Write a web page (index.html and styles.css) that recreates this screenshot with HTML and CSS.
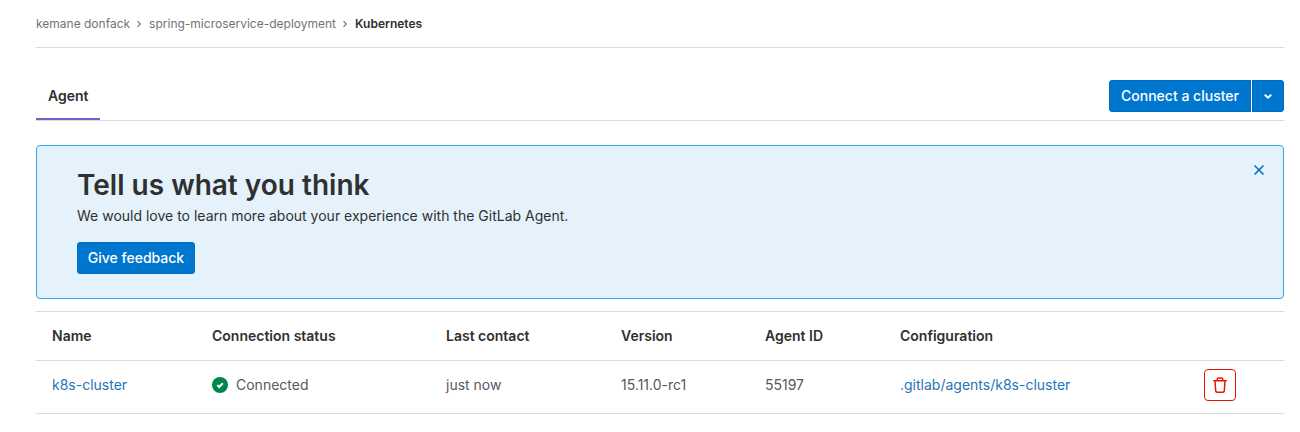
FILE: index.html
```html
<!DOCTYPE html>
<html lang="en">
<head>
<meta charset="utf-8">
<title>Kubernetes</title>
<link rel="stylesheet" href="styles.css">
</head>
<body>
<main class="page">
  <nav class="breadcrumbs">
    <a class="crumb crumb-owner">kemane donfack</a>
    <svg class="crumb-sep" viewBox="0 0 8 8"><path d="M2.5 1.2 5.3 4 2.5 6.8"/></svg>
    <a class="crumb crumb-project">spring-microservice-deployment</a>
    <svg class="crumb-sep" viewBox="0 0 8 8"><path d="M2.5 1.2 5.3 4 2.5 6.8"/></svg>
    <a class="crumb crumb-current">Kubernetes</a>
  </nav>
  <div class="tabs">
    <a class="tab">Agent</a>
    <div class="button-group">
      <button class="button button-connect"><span>Connect a cluster</span></button>
      <button class="button button-toggle" aria-label="More options"><svg viewBox="0 0 16 16"><path d="m4.75 6.75 3.25 3 3.25-3"/></svg></button>
    </div>
  </div>
  <section class="banner">
    <div class="banner-content">
      <h1 class="banner-title">Tell us what you think</h1>
      <p class="banner-text">We would love to learn more about your experience with the GitLab Agent.</p>
      <button class="button button-feedback"><span>Give feedback</span></button>
    </div>
    <svg class="close" viewBox="0 0 16 16"><path d="m3.5 3.5 9 9m0-9-9 9"/></svg>
  </section>
  <div class="table">
    <div class="row row-head">
      <span>Name</span><span>Connection status</span><span>Last contact</span><span>Version</span><span>Agent ID</span><span>Configuration</span><span></span>
    </div>
    <div class="row row-body">
      <a class="link">k8s-cluster</a>
      <span class="status"><svg class="check" viewBox="0 0 16 16"><circle cx="8" cy="8" r="8"/><path d="m5.3 8.1 1.9 1.9 3.6-3.7"/></svg>Connected</span>
      <span>just now</span>
      <span>15.11.0-rc1</span>
      <span>55197</span>
      <a class="link">.gitlab/agents/k8s-cluster</a>
      <button class="delete" aria-label="Delete agent"><svg viewBox="0 0 16 16"><path d="M1.25 3.75h13.5M5.25 3.5V2c0-.7.4-1.1 1.1-1.1h3.3c.7 0 1.1.4 1.1 1.1v1.5M3 4l.7 9.8c.1.9.6 1.4 1.5 1.4h5.6c.9 0 1.4-.5 1.5-1.4L13 4"/></svg></button>
    </div>
  </div>
</main>
</body>
</html>
```
FILE: styles.css
```css
* { box-sizing: border-box; }
body {
  margin: 0;
  background: #fff;
  color: #303030;
  font: 14px/20px Inter, "Liberation Sans", sans-serif;
}
.page { width: 1248px; margin-left: 36px; }
button { font: inherit; padding: 0; }
svg { display: block; fill: none; stroke: currentColor; flex: none; }

.breadcrumbs {
  display: flex;
  align-items: center;
  height: 48px;
  border-bottom: 1px solid #dbdbdb;
  font-size: 12px;
  color: #737278;
}
.crumb-sep { width: 8px; height: 8px; margin: 0 6px 0 5px; stroke-width: 1.1; }
.crumb-current { font-weight: 600; color: #303030; }

.tabs {
  display: flex;
  justify-content: space-between;
  align-items: flex-start;
  height: 73px;
  padding-top: 32px;
  border-bottom: 1px solid #dbdbdb;
}
.tab {
  width: 64px;
  height: 40px;
  padding: 6px 12px;
  border-bottom: 2px solid #6666c4;
  font-weight: 600;
}
.button-group { display: flex; gap: 1px; }
.button {
  display: flex;
  align-items: center;
  justify-content: center;
  height: 32px;
  border: 0;
  border-radius: 4px;
  background: #0077cf;
  box-shadow: inset 0 0 0 1px #006dc0;
  color: #fff;
  font-weight: 500;
}
.button-connect { width: 142px; border-radius: 4px 0 0 4px; }
.button-toggle { width: 32px; border-radius: 0 4px 4px 0; }
.button-toggle svg { width: 16px; height: 16px; stroke-width: 2; }
.button-feedback { width: 118px; }

.banner {
  display: flex;
  justify-content: space-between;
  height: 154px;
  margin-top: 24px;
  padding: 24px 16px 24px 40px;
  border: 1px solid #3ba4e3;
  border-radius: 4px;
  background: #e5f2fc;
}
.banner-title { margin: 0; font-size: 28px; line-height: 30px; font-weight: 600; }
.banner-text { margin: 6px 0 16px; }
.close { width: 16px; height: 16px; margin-top: -8px; color: #0072c6; stroke-width: 1.6; }

.table { margin-top: 12px; border-top: 1px solid #dbdbdb; }
.row {
  display: grid;
  grid-template-columns: 160px 234px 175px 144px 135px 304px 1fr;
  align-items: center;
  padding-left: 16px;
  border-bottom: 1px solid #dbdbdb;
}
.row-head { height: 49px; font-weight: 600; }
.row-body { height: 53px; padding-bottom: 4px; color: #59585e; }
.link { color: #1f75b8; }
.status { display: flex; align-items: center; gap: 8px; }
.check { width: 16px; height: 16px; }
.check circle { fill: #00854d; stroke: none; }
.check path { stroke: #fff; stroke-width: 2; }
.delete {
  display: flex;
  align-items: center;
  justify-content: center;
  width: 32px;
  height: 32px;
  border: 1px solid #ee1200;
  border-radius: 4px;
  background: #fff;
  color: #ee1200;
}
.delete svg { width: 16px; height: 16px; stroke-width: 1.5; }
```
